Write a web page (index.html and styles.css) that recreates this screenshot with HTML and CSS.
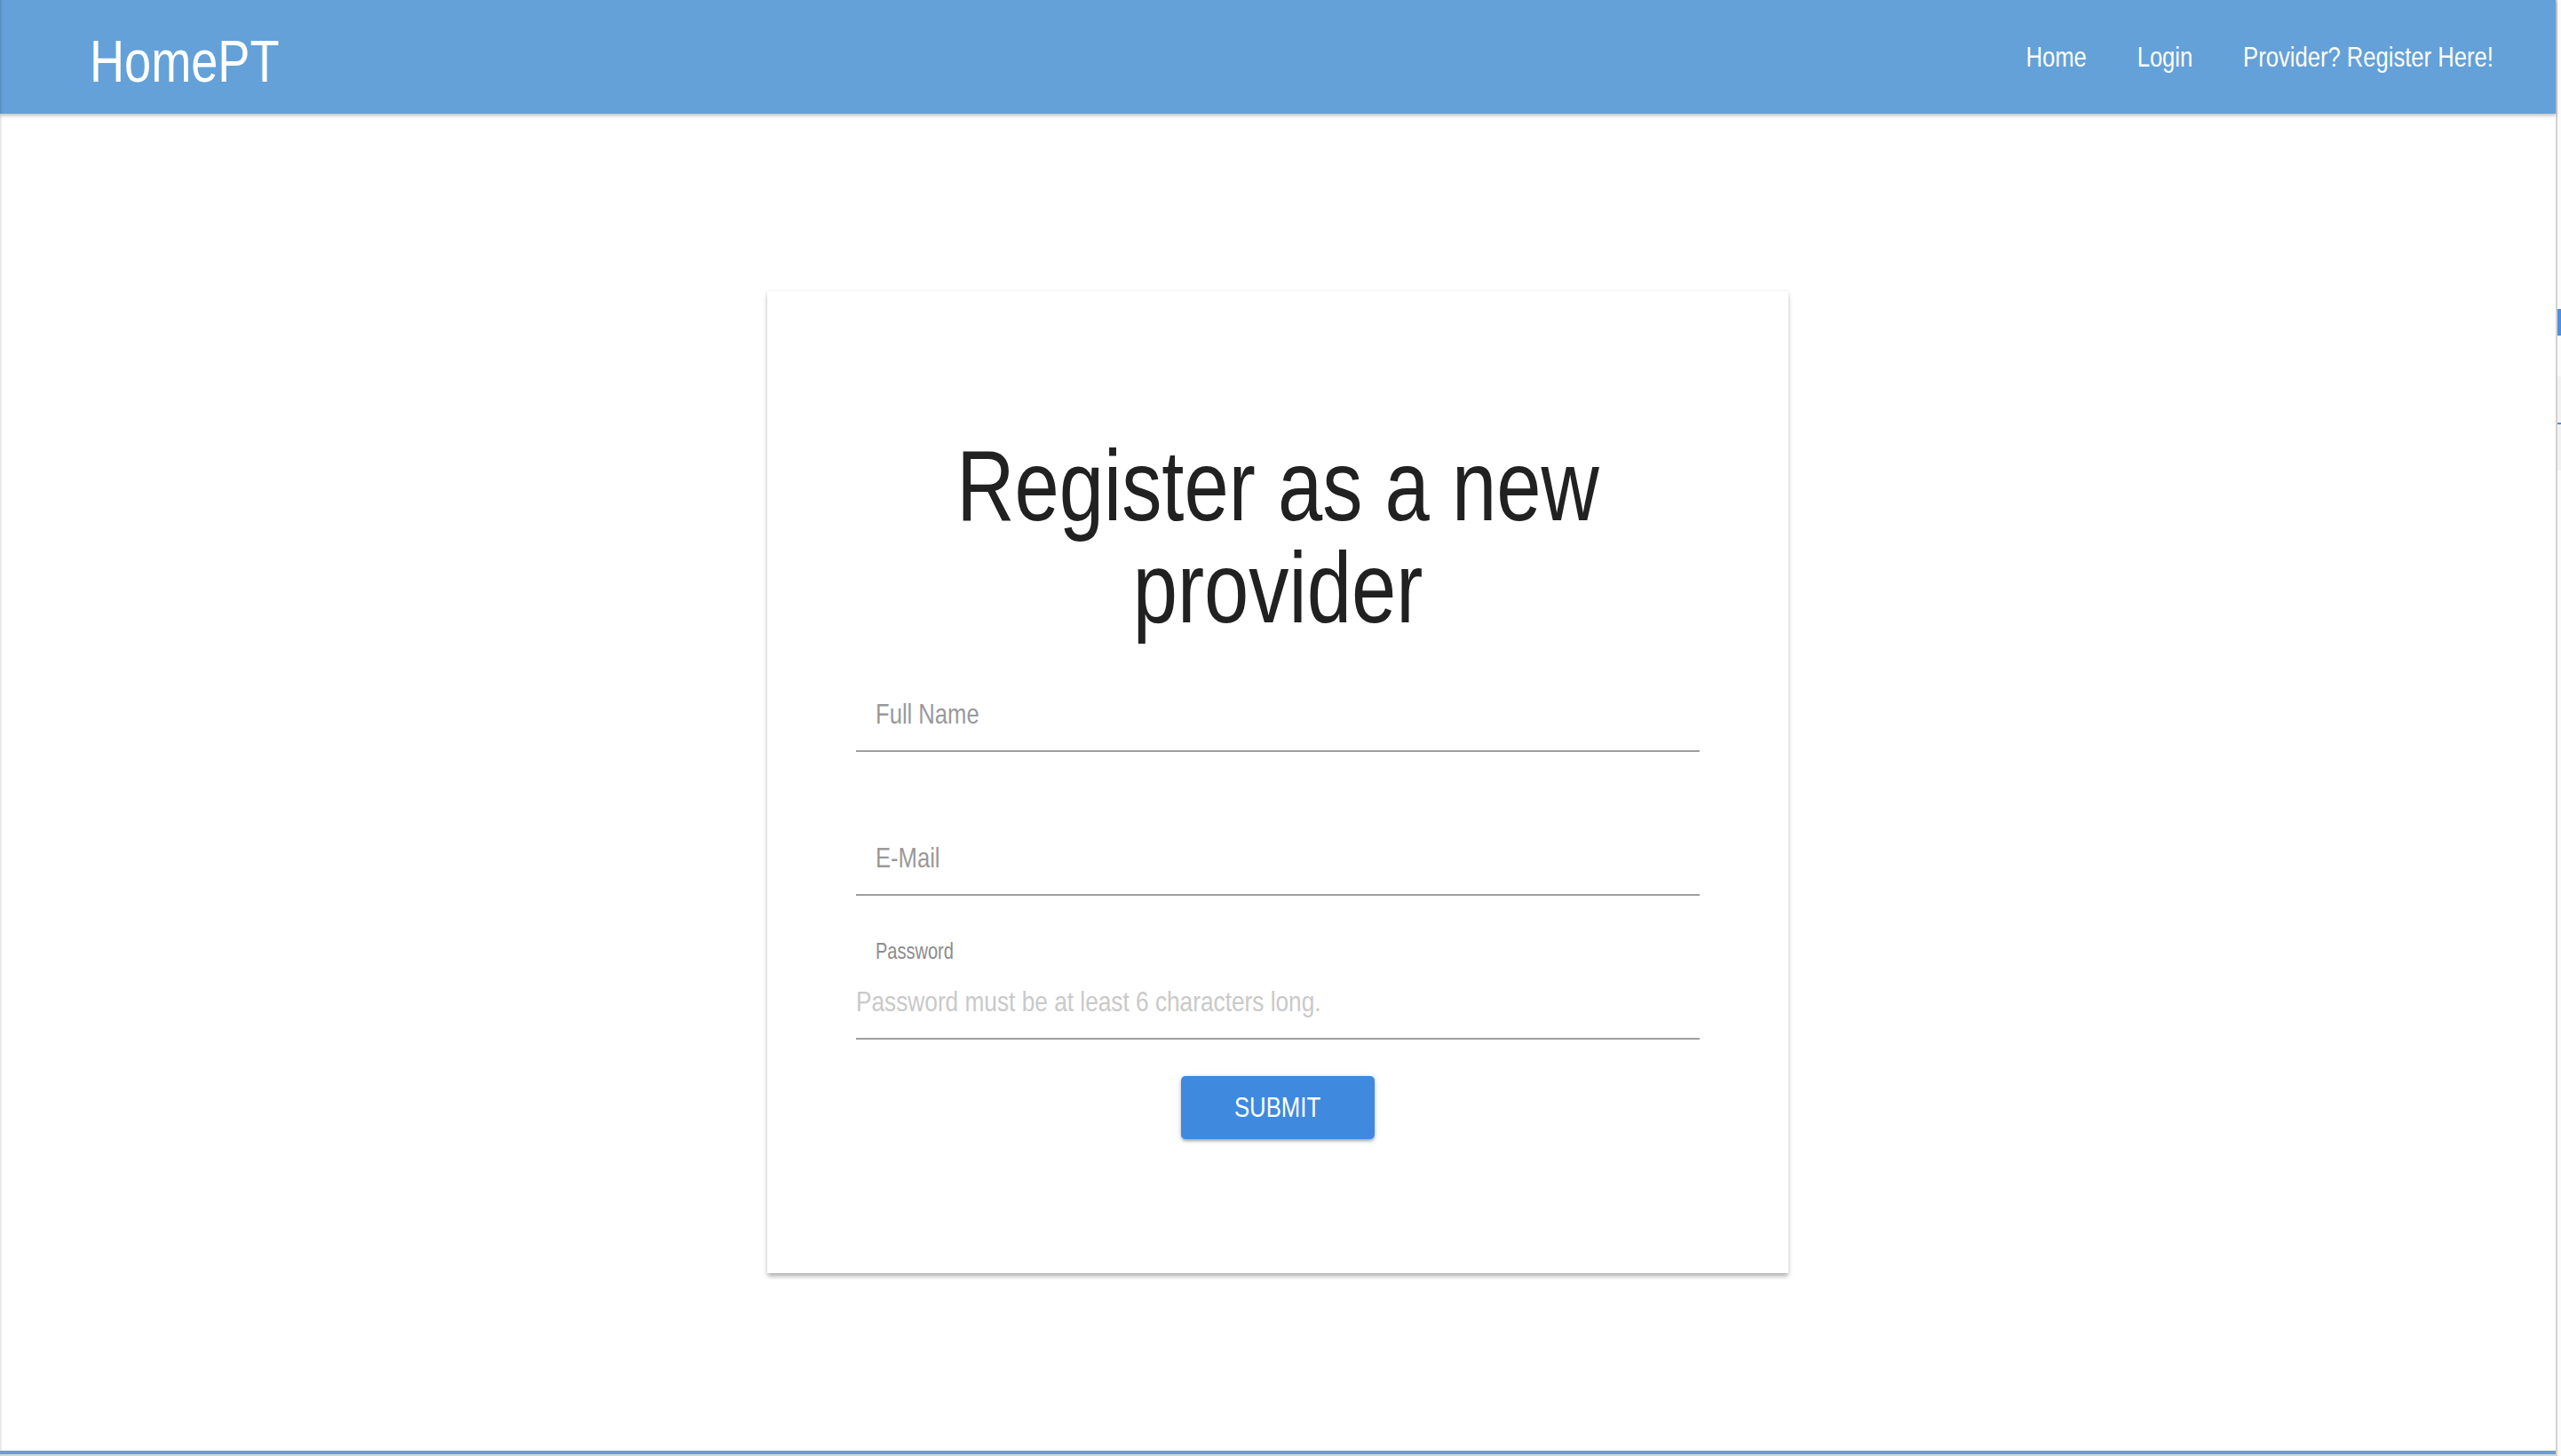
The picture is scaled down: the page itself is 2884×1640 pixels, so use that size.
FILE: index.html
```html
<!DOCTYPE html>
<html lang="en">
<head>
<meta charset="utf-8">
<title>HomePT</title>
<link rel="stylesheet" href="styles.css">
</head>
<body>
<div class="window">
  <div class="page">
    <header class="appbar">
      <div class="logo">HomePT</div>
      <nav class="nav">
        <a class="nav-link" href="#">Home</a>
        <a class="nav-link" href="#">Login</a>
        <a class="nav-link" href="#">Provider? Register Here!</a>
      </nav>
    </header>
    <main class="main">
      <section class="card">
        <h1 class="title">Register as a new<br>provider</h1>
        <div class="field field-first">
          <label class="label">Full Name</label>
        </div>
        <div class="field">
          <label class="label">E-Mail</label>
        </div>
        <div class="field">
          <label class="label label-small">Password</label>
          <div class="placeholder">Password must be at least 6 characters long.</div>
        </div>
        <div class="actions">
          <button class="submit" type="button"><span class="submit-text">SUBMIT</span></button>
        </div>
      </section>
    </main>
    <div class="bottom-blue"></div>
    <div class="bottom-gray"></div>
  </div>
  <div class="vline"></div>
  <div class="strip">
    <div class="strip-gap1"></div>
    <div class="strip-blue"></div>
    <div class="strip-gap2"></div>
    <div class="strip-pale"></div>
    <div class="strip-pale2"></div>
  </div>
</div>
</body>
</html>
```
FILE: styles.css
```css
html, body {
  margin: 0;
  padding: 0;
  background: #ffffff;
  overflow: hidden;
}

.window {
  display: flex;
  width: 2884px;
  height: 1640px;
}

.page {
  width: 2878px;
  height: 1640px;
  display: flex;
  flex-direction: column;
  font-family: "Liberation Sans", Arial, sans-serif;
}

.appbar {
  position: relative;
  z-index: 2;
  height: 128px;
  flex: 0 0 128px;
  background: #63a1d8;
  display: flex;
  justify-content: space-between;
  align-items: flex-start;
  padding: 0 70px 0 101px;
  box-shadow: 0 2px 4px rgba(0, 0, 0, 0.28), inset 3px 0 3px -2px rgba(0, 0, 0, 0.18);
  color: #ffffff;
}

.logo {
  margin-top: 36px;
  font-size: 66px;
  line-height: 66px;
  color: #ffffff;
  transform: scaleX(0.82);
  transform-origin: 0 50%;
}

.nav {
  display: flex;
  gap: 71px;
  margin-top: 46px;
  transform: scaleX(0.8);
  transform-origin: 100% 50%;
}

.nav-link {
  color: #ffffff;
  text-decoration: none;
  font-size: 32px;
  line-height: 36px;
}

.main {
  flex: 1 1 auto;
  display: flex;
  justify-content: center;
  align-items: flex-start;
  box-shadow: inset 3px 0 3px -2px rgba(0, 0, 0, 0.16);
}

.card {
  margin-top: 200px;
  width: 1150px;
  box-sizing: border-box;
  padding: 162px 100px 151px;
  background: #ffffff;
  box-shadow: 0 3px 6px rgba(0, 0, 0, 0.18), 0 5px 4px -1px rgba(0, 0, 0, 0.14), 0 0 3px rgba(0, 0, 0, 0.06);
  display: flex;
  flex-direction: column;
}

.title {
  margin: 0;
  font-weight: 400;
  font-size: 113px;
  line-height: 115px;
  text-align: center;
  color: #212121;
  transform: scaleX(0.8);
  transform-origin: 50% 50%;
}

.field {
  height: 162px;
  box-sizing: border-box;
  border-bottom: 2px solid #9e9e9e;
  display: flex;
  flex-direction: column;
  align-items: flex-start;
  justify-content: flex-end;
  padding-bottom: 23px;
}

.field-first {
  height: 127px;
}

.label {
  display: block;
  margin-left: 22px;
  font-size: 32px;
  line-height: 36px;
  color: #999999;
  transform: scaleX(0.8);
  transform-origin: 0 50%;
  white-space: nowrap;
}

.label-small {
  font-size: 25px;
  line-height: 28px;
  color: #8c8c8c;
  margin-bottom: 25px;
}

.placeholder {
  font-size: 32px;
  line-height: 36px;
  color: #c9c9c9;
  white-space: nowrap;
  transform: scaleX(0.82);
  transform-origin: 0 50%;
}

.actions {
  display: flex;
  justify-content: center;
  margin-top: 41px;
}

.submit {
  width: 218px;
  height: 71px;
  border: none;
  border-radius: 5px;
  background: #3f89de;
  color: #ffffff;
  font-family: "Liberation Sans", Arial, sans-serif;
  font-size: 31px;
  line-height: 36px;
  padding: 0;
  display: flex;
  justify-content: center;
  align-items: center;
  box-shadow: 0 3px 3px -1px rgba(0, 0, 0, 0.2), 0 2px 4px rgba(0, 0, 0, 0.14), 0 1px 8px rgba(0, 0, 0, 0.1);
}

.submit-text {
  display: inline-block;
  transform: scaleX(0.83);
}

.bottom-blue {
  flex: 0 0 4px;
  background: #63a1d8;
}

.bottom-gray {
  flex: 0 0 2px;
  background: #d6d6d6;
}

.vline {
  width: 2px;
  height: 1640px;
  background: #d2d2d2;
}

.strip {
  width: 4px;
  height: 1640px;
  display: flex;
  flex-direction: column;
  background: #fbfbfb;
}

.strip-gap1 {
  height: 348px;
}

.strip-blue {
  height: 30px;
  background: #4a90e2;
}

.strip-gap2 {
  height: 46px;
}

.strip-pale {
  height: 52px;
  background: #f2f2f2;
  border-bottom: 2px solid #4a90e2;
}

.strip-pale2 {
  height: 52px;
  background: #f2f2f2;
}
```
